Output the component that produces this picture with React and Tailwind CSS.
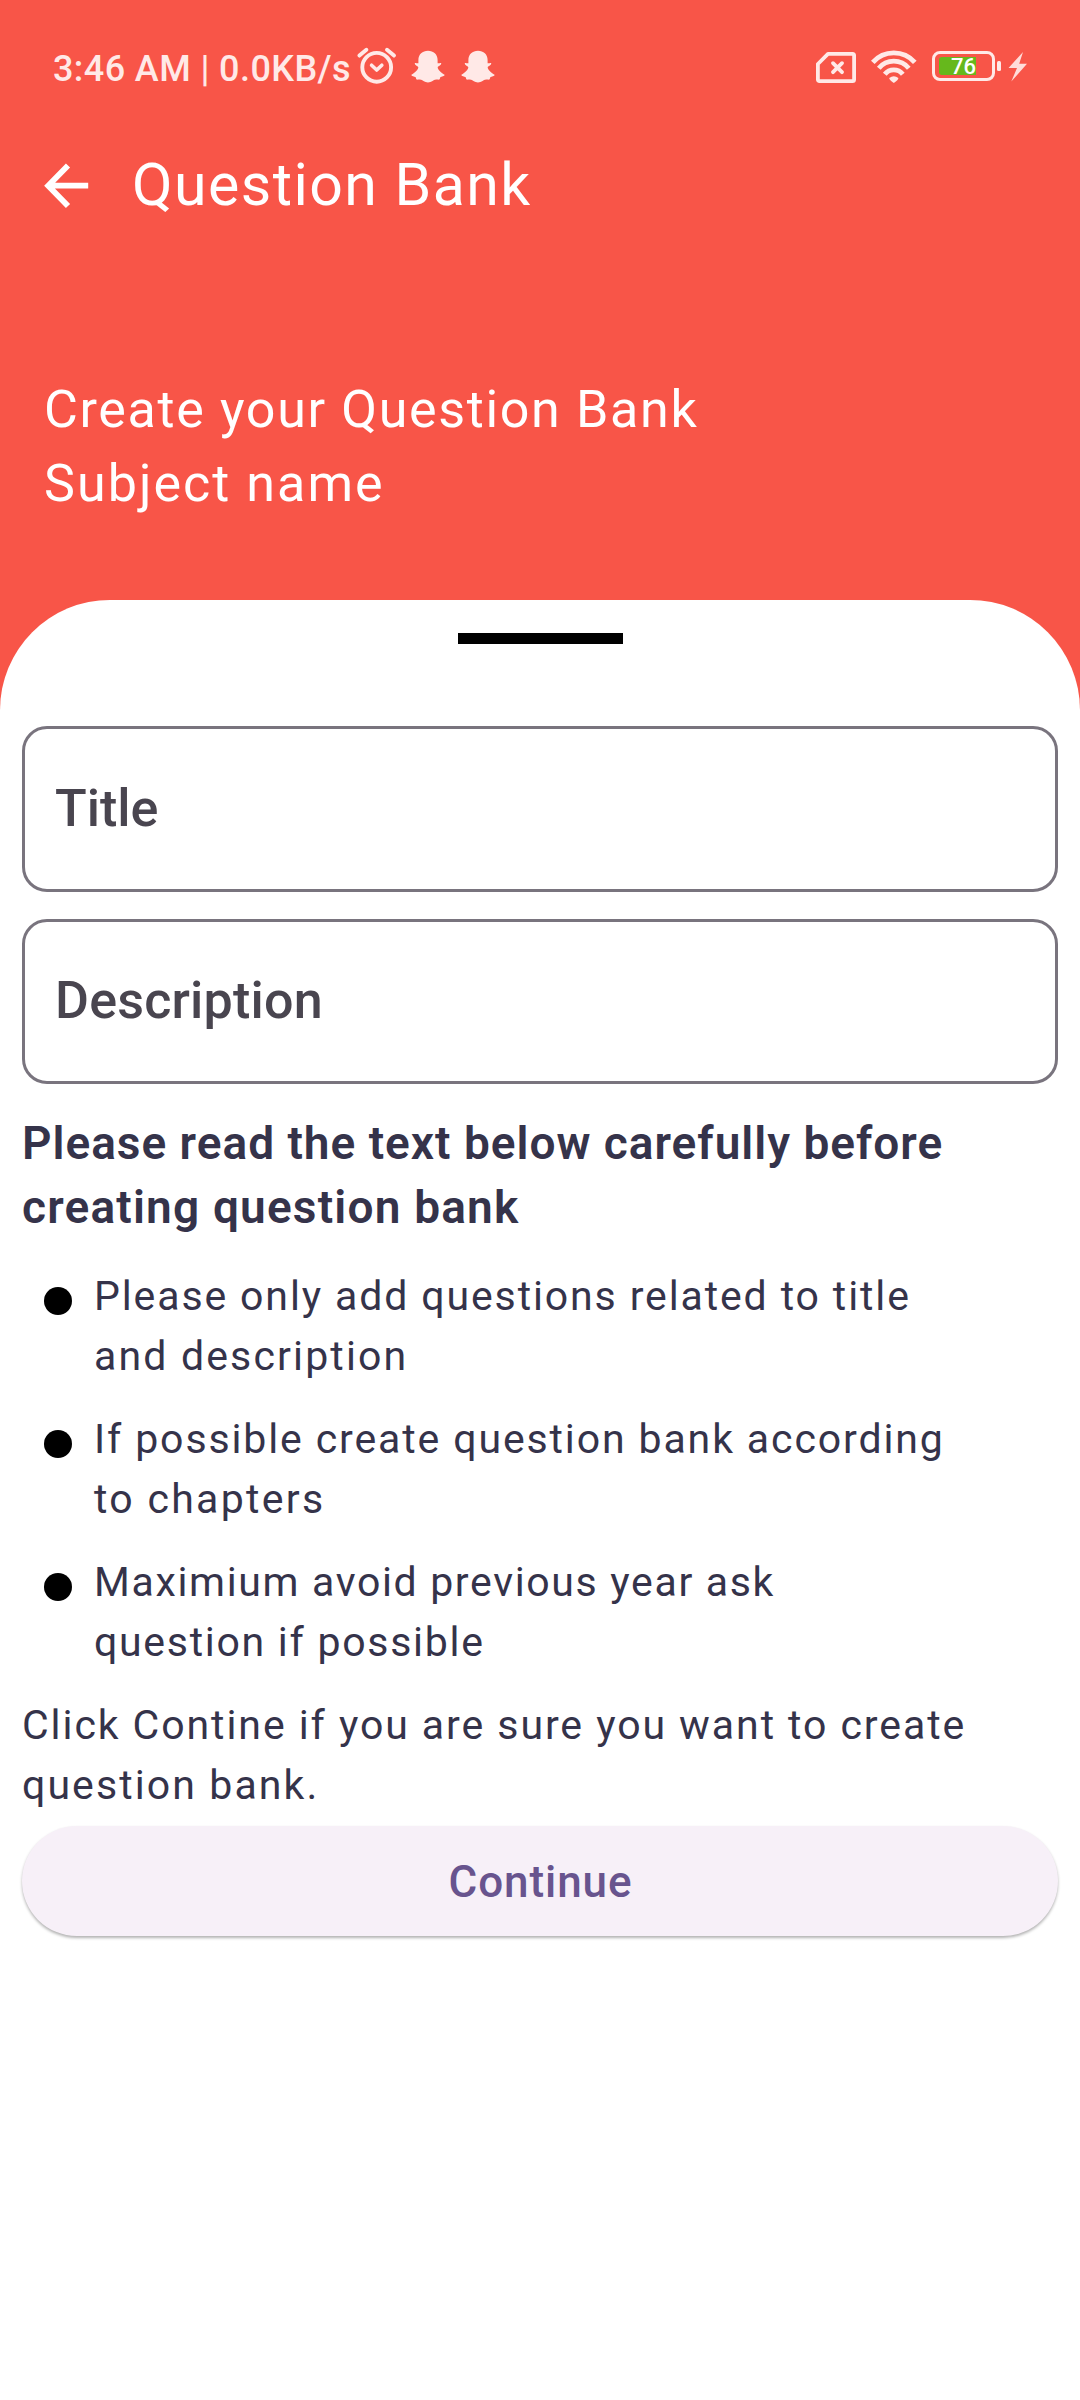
function AlarmIcon() {
  return (
    <svg width="42" height="40" viewBox="0 0 42 40" fill="none" stroke="#ffe9e7" strokeWidth="3.9" strokeLinecap="round" strokeLinejoin="round">
      <circle cx="20.7" cy="21.3" r="14.4" />
      <path d="M15.6 19.2 20.7 24 25.8 19.2" strokeWidth="3.6" />
      <path d="M3.4 9.6 10.4 3.8M31 3.8 38 9.6" />
    </svg>
  );
}

function GhostIcon() {
  return (
    <svg width="34" height="33" viewBox="0 0 34 33" fill="#ffe9e7">
      <path d="M17 .7C22.5 .7 26.6 4.3 26.6 10V13.3C28.3 13.4 29.9 12.5 30.3 13.5C30.4 15 27.5 16 26.7 17C26.5 19.5 30 22.8 33.6 24.7C33.7 26.2 30.5 26.5 29.3 27.3C28.9 28.5 29 29.5 28 29.7C25.5 29.5 24 29.5 22 30.8C20 32.2 18.5 32.4 17 32.4C15.5 32.4 14 32.2 12 30.8C10 29.5 8.5 29.5 6 29.7C5 29.5 5.1 28.5 4.7 27.3C3.5 26.5 .3 26.2 .4 24.7C4 22.8 7.5 19.5 7.3 17C6.5 16 3.6 15 3.7 13.5C4.1 12.5 5.7 13.4 7.4 13.3V10C7.4 4.3 11.5 .7 17 .7Z" />
    </svg>
  );
}

function SimIcon() {
  return (
    <svg width="42" height="34" viewBox="0 0 42 34" fill="none" stroke="#ffe9e7" strokeWidth="3.8" strokeLinejoin="round" strokeLinecap="round">
      <path d="M13 2.9H37.5Q39.1 2.9 39.1 4.5V28.5Q39.1 30.1 37.5 30.1H4.5Q2.9 30.1 2.9 28.5V13Z" />
      <path d="M18 12.2 27 21.2M27 12.2 18 21.2" />
    </svg>
  );
}

function WifiIcon() {
  return (
    <svg width="48" height="36" viewBox="0 0 48 36" fill="none" stroke="#ffe9e7" strokeWidth="4.8">
      <path d="M2.8 14.3A28 28 0 0 1 44.8 14.3" />
      <path d="M8.8 20.2A19.5 19.5 0 0 1 38.8 20.2" />
      <path d="M14.8 26.2A11.5 11.5 0 0 1 32.8 26.2" />
      <path d="M19.2 30Q23.8 26.4 28.4 30Q28.4 32 23.8 35Q19.2 32 19.2 30Z" fill="#ffe9e7" stroke="none" />
    </svg>
  );
}

function BoltIcon() {
  return (
    <svg width="20" height="31" viewBox="0 0 20 31" fill="#ffdcd9">
      <path d="M15 1 .5 17H9L3.3 30.5 19 12.8H11.2Z" />
    </svg>
  );
}

function Battery() {
  return (
    <div className="flex items-center">
      <div className="flex h-[30px] w-[63px] items-center rounded-[8px] border-[3px] border-[#ffe9e7] pl-[4px]">
        <div className="flex h-[18px] w-[37px] items-center justify-end rounded-l-[3px] bg-[#66b81c] pt-px text-[22px] font-medium leading-[18px] text-white">
          76
        </div>
      </div>
      <div className="ml-[2px] h-[10px] w-[4px] rounded-[1.5px] bg-[#ffe9e7]" />
    </div>
  );
}

function StatusBar() {
  return (
    <div className="flex h-[48px] items-center text-[#ffe9e7]">
      <div className="ml-[53px] w-[303px] whitespace-nowrap pt-[5px] text-[36px] font-medium leading-[48px] tracking-[0.41px]">
        3:46 AM | 0.0KB/s
      </div>
      <AlarmIcon />
      <div className="ml-[13px] flex gap-[16px]">
        <GhostIcon />
        <GhostIcon />
      </div>
      <div className="ml-auto mr-[52px] flex items-center">
        <div className="mt-[4px]">
          <SimIcon />
        </div>
        <div className="ml-[13px]">
          <WifiIcon />
        </div>
        <div className="ml-[14px]">
          <Battery />
        </div>
        <div className="ml-[7px]">
          <BoltIcon />
        </div>
      </div>
    </div>
  );
}

function Field({ label, className }) {
  return (
    <div className={`flex items-center rounded-[25px] border-[3px] border-[#79747e] pl-[30px] text-[52px] font-medium leading-[60px] text-[#49454f] ${className}`}>
      {label}
    </div>
  );
}

function Rule({ children }) {
  return (
    <li className="flex h-[120px] pl-[22px]">
      <span className="mt-[21px] mr-[22px] size-[28px] shrink-0 rounded-full bg-black" />
      <div>{children}</div>
    </li>
  );
}

export default function App() {
  return (
    <div className="flex h-[2400px] w-[1080px] flex-col overflow-hidden bg-[#f85548] pt-[42px] font-[Roboto,sans-serif]">
      <StatusBar />

      <header className="mt-[40px] flex h-[110px] items-center text-white">
        <svg className="ml-[44px] mt-[2px]" width="45" height="46" viewBox="0 0 45 46" fill="none" stroke="#fff" strokeWidth="5.8">
          <path d="M24 2.4 4.2 22.7 24 43M4.2 22.7H44.2" />
        </svg>
        <h1 className="ml-[43px] whitespace-nowrap text-[59px] leading-[72px] tracking-[1.45px]">Question Bank</h1>
      </header>

      <div className="ml-[44px] mt-[133px] h-[148px] whitespace-nowrap text-[52px] leading-[74px] text-white">
        <p className="tracking-[1.66px]">Create your Question Bank</p>
        <p className="tracking-[2.05px]">Subject name</p>
      </div>

      <main className="mt-[79px] flex grow flex-col whitespace-nowrap rounded-t-[110px] bg-white px-[22px] pt-[33px] text-[#35334a]">
        <div className="h-[11px] w-[165px] self-center bg-black" />

        <Field label="Title" className="mt-[82px] h-[166px]" />
        <Field label="Description" className="mt-[27px] h-[165px] pb-[2px] tracking-[0.2px]" />

        <div className="mt-[27px] h-[128px] text-[46px] font-semibold leading-[64px]">
          <p className="tracking-[0.98px]">Please read the text below carefully before</p>
          <p className="tracking-[1.18px]">creating question bank</p>
        </div>

        <ul className="mt-[27px] flex flex-col gap-[23px] text-[41px] leading-[60px]">
          <Rule>
            <p className="tracking-[1.88px]">Please only add questions related to title</p>
            <p className="tracking-[2.16px]">and description</p>
          </Rule>
          <Rule>
            <p className="tracking-[1.88px]">If possible create question bank according</p>
            <p className="tracking-[2.3px]">to chapters</p>
          </Rule>
          <Rule>
            <p className="tracking-[1.66px]">Maximium avoid previous year ask</p>
            <p className="tracking-[1.72px]">question if possible</p>
          </Rule>
        </ul>

        <div className="mt-[23px] h-[120px] text-[41px] leading-[60px]">
          <p className="tracking-[1.93px]">Click Contine if you are sure you want to create</p>
          <p className="tracking-[2.1px]">question bank.</p>
        </div>

        <button className="mt-[11px] flex h-[110px] items-center justify-center rounded-full bg-[#f7f0f8] pl-px pt-px text-[44px] font-medium leading-[56px] tracking-[0.93px] text-[#68548e] shadow-[0_2px_3px_rgba(0,0,0,0.3)]">
          Continue
        </button>
      </main>
    </div>
  );
}
